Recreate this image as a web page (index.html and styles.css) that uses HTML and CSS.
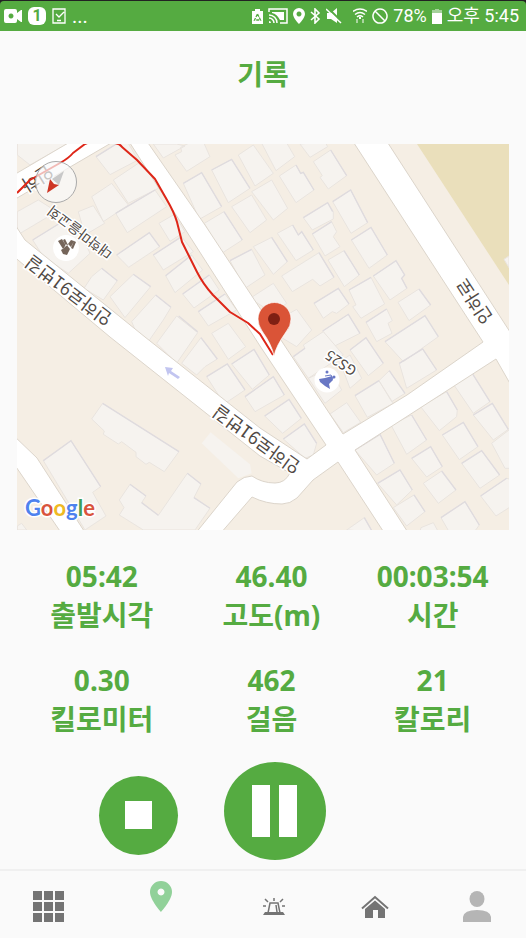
FILE: index.html
```html
<!DOCTYPE html>
<html lang="ko">
<head>
<meta charset="utf-8">
<meta name="viewport" content="width=device-width, initial-scale=1">
<title>기록</title>
<link rel="stylesheet" href="styles.css">
</head>
<body>
<div class="status">
  <div class="status-bar">
    <div class="status-group">
      <svg width="18" height="14" viewBox="0 0 18 14"><path fill="#fff" fill-rule="evenodd" d="M2 0h9q2 0 2 2v2l4-3h1v12h-1l-4-3v2q0 2-2 2H2q-2 0-2-2V2Q0 0 2 0zM7 4.500a2.500 2.500 0 1 0 .01 0z"/></svg>
      <span class="badge">1</span>
      <svg width="14" height="16" viewBox="0 0 14 16"><path fill="none" stroke="#fff" stroke-width="1.300" d="M1 1h12v14H1zM4 6l3 3 5-5M5 12.500h4"/></svg>
      <span class="dots">...</span>
    </div>
    <div class="status-group status-right">
      <svg width="11" height="15" viewBox="0 0 11 15"><path fill="#fff" d="M3 0h5v2h3v13H0V2h3z"/><path fill="none" stroke="#55ab41" stroke-width="1.300" stroke-dasharray="3 1" d="M5.500 5l3 6h-6z"/></svg>
      <svg width="20" height="16" viewBox="0 0 20 16"><path fill="none" stroke="#fff" stroke-width="1.500" d="M1 4V1h18v14h-7M1 7a8 8 0 0 1 8 8M1 10a5 5 0 0 1 5 5"/><path fill="#fff" d="M1 13a2 2 0 0 1 2 2H1zM4 4h12v8h-4Q9 6 4 5z"/></svg>
      <svg width="12" height="16" viewBox="0 0 12 16"><path fill="#fff" fill-rule="evenodd" d="M6 0a6 6 0 0 1 6 6c0 4-6 10-6 10S0 10 0 6a6 6 0 0 1 6-6zm0 3.500a2.500 2.500 0 1 0 .01 0z"/></svg>
      <svg width="11" height="16" viewBox="0 0 11 16"><path fill="none" stroke="#fff" stroke-width="1.600" d="M1 4l8 7-4 4V1l4 4-8 7"/></svg>
      <svg width="16" height="16" viewBox="0 0 16 16"><path fill="#fff" d="M1 5h4l6-5v15l-6-4H1z"/><path stroke="#55ab41" stroke-width="2" d="M2 0l14 14"/><path stroke="#fff" stroke-width="1.500" d="M0 1l15 14"/></svg>
      <svg class="wifi" width="14" height="16" viewBox="0 0 14 16"><path fill="none" stroke="#fff" stroke-width="1.500" d="M0 3.500q7-5 14 0M2 6.500q5-4 10 0M4 9q3-2.500 6 0"/><path fill="#fff" d="M6 9h2v2H6z"/><path opacity=".5" stroke="#fff" stroke-width="2" d="M4 11v4M10 11v4"/></svg>
      <svg width="16" height="16" viewBox="0 0 16 16"><path fill="none" stroke="#fff" stroke-width="1.500" d="M8 1a7 7 0 1 0 .01 0M3 3l10 10"/></svg>
      <span>78%</span>
      <svg width="10" height="15" viewBox="0 0 10 15"><path fill="#a5d29b" d="M3 0h4v1h3v4H0V1h3z"/><path fill="#fff" d="M0 4h10v11H0z"/></svg>
      <span class="clock">오후 5:45</span>
    </div>
  </div>
</div>

<header class="title"><h1>기록</h1></header>

<main>
  <svg class="map" viewBox="17 144 492 386" role="img" aria-label="지도">
    <path fill="#f5eee4" d="M17 144h492v386H17z"/>
    <path fill="#eadfbb" d="M417 144h92v141z"/>
    <g class="buildings">
      <g transform="translate(10 140) scale(.3333)">
        <path d="M22 0h170L60 75 22 45zM258 50L330 5 352 5 384 60 300 104zM310 120L385 70 435 110 445 145 355 190zM245 170L305 130 355 195 280 245zM317 220L435 150 470 200 352 278zM205 215L250 197 284 250 225 285zM22 215L85 180 140 215 22 285zM68 300L165 240 215 285 240 340 175 400 100 350zM320 345L418 278 449 320 356 382zM447 250L495 222 500 235 525 275 480 304zM430 345L515 290 550 335 460 390zM467 407L545 345 578 390 495 458zM518 462L598 405 628 450 552 504zM565 515L645 462 680 510 595 558zM245 410L275 385 322 422 280 480 222 445zM300 470L370 403 422 440 345 533zM365 545L437 465 483 502 460 540 415 605 380 580zM500 528L563 578 500 670 440 610zM495 45L515 35 512 22 545 5 580 5 600 50 530 94zM605 90L665 58 720 145 655 188zM520 130L575 98 635 200 568 238zM665 200L725 165 770 240 720 278zM583 250L642 215 697 300 635 340zM430 12L500 12 525 18 460 54z"/>
        <path class="shade" d="M258 50L330 5M317 220L435 150M68 300L165 240M320 345L418 278 449 320M430 345L515 290M467 407L545 345M518 462L598 405M565 515L645 462M275 385L322 422M370 403L422 440M437 465L483 502M506 528L563 575M520 130L575 98 635 200M642 215L697 300M605 90L665 58 720 145"/>
      </g>
      <g transform="translate(260 140) scale(.3333)">
        <path d="M0 0L75 0 104 50 48 92zM-65 45L-20 15 40 100-15 138zM120 12L195 5 203 20 150 52zM160 65L212 30 260 107 205 147 180 112 187 107zM58 108L108 75 122 100 130 97 162 150 108 188zM-25 155L35 120 83 205 40 240zM218 185L272 150 323 248 273 280zM130 233L203 188 220 215 220 237 157 270zM52 280L98 255 115 285 125 275 160 330 108 362zM157 282L215 245 230 275 220 290 240 320 195 348zM274 300L333 262 382 345 327 385zM-20 320L35 292 82 365 40 403zM65 408L177 338 222 412 180 438 158 418 97 455zM204 360L252 332 298 405 253 440zM340 408L408 362 434 405 425 415 441 445 390 480zM267 450L333 412 374 492 303 535 278 500 288 495zM-90 362L-25 328 15 405-45 445zM-30 475L40 430 80 490 40 520zM162 490L235 445 267 492 230 520 217 515 190 535zM414 487L477 447 512 495 447 542zM318 547L380 507 397 542 384 550 396 580 350 605zM188 573L265 523 300 580 220 620zM80 525L110 508 155 570 110 620 60 590z"/>
        <path d="M732 358l15-10v35z"/>
        <path class="shade" d="M212 30L260 107M108 75L122 100 130 97 162 150M218 185L272 150 323 248M130 233L203 188 218 215M98 255L115 285 125 275 160 330M157 282L215 245M274 300L333 262 382 345M35 292L82 365M177 338L222 412M252 332L298 405M340 408L408 362 434 405 425 415 441 445M267 450L333 412M162 490L235 445 267 492M477 447L512 495M318 547L380 507M188 573L265 523 300 580M-90 362L-25 328"/>
      </g>
      <g transform="translate(10 335) scale(.3333)">
        <path d="M278 205L507 350 463 410 418 382 408 388 378 365 378 352 335 320 325 327 280 298 283 288 245 252zM100 377L183 317 272 455 248 472 288 543 225 585zM360 448L408 483 395 503 445 541 532 415 573 447 552 488 600 520 555 585H400L328 540 342 518 328 495zM22 573L35 565 50 585H22zM573 8L622 72 585 95 560 120 515 85zM605-5L655-35 707 35 655 73zM590 125L652 87 705 165 650 202 635 195zM665 87L732 43 778 120 727 163z"/>
        <path stroke="none" d="M602 292L720 388 725 415 685 430 575 325z"/>
        <path class="shade" d="M278 205L507 350M100 377L183 317 272 455M360 448L408 483M395 503L445 541M532 415L573 447M552 488L600 520M573 8L622 72M590 125L652 87 705 165M665 87L732 43 778 120"/>
      </g>
      <g transform="translate(260 335) scale(.3333)">
        <path d="M-45 185L40 125 73 180-15 230zM14 243L87 193 124 250 68 295zM70 312L133 267 170 325 160 360 135 370zM100 65L135 40 130 30 190-10 250 60 145 130zM270 45L318 8 370 85 325 122zM240 80L270 60 305 130 270 160zM145 130L210 100 245 165 195 205zM210 237L260 203 302 262 250 293zM285 182L357 137 400 205 322 247zM357 137L388 107 435 175 395 200zM375 20L495-58 535 5 430 80zM418 85L488 42 530 105 440 160zM285 345L360 298 403 385 350 420zM393 270L455 240 500 315 440 358zM482 215L560 170 592 225 590 245 538 287zM582 150L635 112 690 200 640 235zM640 240L697 205 745 283 700 315zM547 300L610 262 654 335 598 374zM455 370L512 335 547 395 500 426zM605 385L665 347 719 420 660 460zM695 325L760 275V400L735 400zM490 445L545 408 588 465 535 505zM353 445L420 405 457 465 410 510zM400 518L462 480 495 530 440 573zM662 483L740 430 760 435V510L708 543zM543 548L615 500 658 570 640 595H570zM483 578L520 563 535 590H480zM260 585L313 548 337 590z"/>
        <path class="shade" d="M-45 185L40 125 73 180M14 243L87 193 124 250M70 312L133 267 170 325M100 65L135 40M270 45L318 8 370 85M285 182L357 137M388 107L435 175M375 20L495-58 535 5M418 85L488 42 530 105M285 345L360 298 403 385M455 240L500 315M560 170L592 225M635 112L690 200M640 240L697 205 745 283M547 300L610 262 654 335M455 370L512 335 547 395M605 385L665 347 719 420M545 408L588 465M353 445L420 405 457 465M462 480L495 530M662 483L740 430M543 548L615 500 658 570M313 548L337 590"/>
      </g>
    </g>
    <g class="roads">
      <path d="M128 140h18L205 225 343 434 407 395 483 342 352 140H386L512 335V387L496 359 355 450 409 534H385L338 462 313 480 297 498Q290 504 282 504 266 504 252 497L220 534H195L237 482Q244 476 252 476 262 483 275 483 285 483 290 473L260 456 110 337 12 255V220L25 240 145 337 260 428 307 459 326 445 260 346z"/>
      <path d="M12 434L37 458 86 534H62L12 461zM12 176L75 139H118L12 201z"/>
    </g>

    <path class="way" d="M165 367l8 1-2 3 9 6-2 2-9-6-1 3z"/>
    <g class="labels">
      <text class="road-name" transform="translate(257 439) rotate(216)" dy="6">인하로91번길</text>
      <text class="road-name" transform="translate(69 290) rotate(217)" dy="6">인하로91번길</text>
      <text class="road-name" transform="translate(475 301) rotate(237)" dy="6">인하로</text>
      <text class="road-name" transform="translate(37 178) rotate(148)" dy="6">인하</text>
      <text class="place" transform="translate(80 232) rotate(217)" dy="5">대학마을교회</text>
      <text class="place" transform="translate(341 363) rotate(214)" dy="5">GS25</text>
    </g>
    <circle cx="66" cy="248" r="13" fill="#fff"/>
    <path fill="#75655a" d="M58 241l4-2 4 7-3 3zM63 240l2-1 3 6-2 1zM61 250l2 4 4 1 3-6-4-5-2 4zM68 244l3-4 3 1-3 6zM71 248l3-7 2 1-3 7z"/>
    <circle cx="327" cy="380" r="12.500" fill="#fff"/>
    <path fill="#6877c4" d="M319 379l6-1 7-2 1 4-4 4 1 5-5-3-5-4z"/><path fill="none" stroke="#6877c4" d="M325 376l6-1 2 4"/><circle cx="327" cy="372" r="1.500" fill="#6877c4"/><circle cx="334" cy="377" r="1.500" fill="#6877c4"/>

    <path class="route" d="M17 193Q23 187 30 180L60 163Q69 158 73 153L85 144 100 138 115 143Q120 144 122 147L137 160 155 179 167 200Q174 212 177 222L182 242 197 272Q203 284 213 295L230 312 248 323 260 334 273 355"/>
    <circle cx="56" cy="182" r="20.500" fill="#fafafa" fill-opacity=".7" stroke="#aaa" stroke-width="1"/>
    <path fill="#c8c8c8" d="M64 171l-5 14-7-6z"/><path fill="#ce3524" d="M47 193l3-14 4 5 5 1z"/>
    <path fill="#da5437" stroke="#fff" stroke-opacity=".7" d="M274 356Q272 345 262 331 258 325 258 319A16.500 16.500 0 0 1 291 319Q291 326 286 332 276 346 274 356z"/>
    <circle cx="274" cy="319" r="6" fill="#7f2013"/>
    <text class="google" x="25" y="516"><tspan fill="#4e82ee">G</tspan><tspan fill="#d9543d">o</tspan><tspan fill="#efb924">o</tspan><tspan fill="#4e82ee">g</tspan><tspan fill="#3f9d58">l</tspan><tspan fill="#d9543d">e</tspan></text>
  </svg>

  <dl class="stats">
    <div><dd>05:42</dd><dt>출발시각</dt></div>
    <div><dd>46.40</dd><dt>고도(m)</dt></div>
    <div><dd>00:03:54</dd><dt>시간</dt></div>
    <div><dd>0.30</dd><dt>킬로미터</dt></div>
    <div><dd>462</dd><dt>걸음</dt></div>
    <div><dd>21</dd><dt>칼로리</dt></div>
  </dl>

  <div class="actions">
    <button class="stop" type="button" aria-label="정지"><svg width="27" height="28" viewBox="0 0 27 28"><path fill="#fff" d="M0 0h27v28H0z"/></svg></button>
    <button class="pause" type="button" aria-label="일시정지"><svg width="46" height="52" viewBox="0 0 46 52"><path fill="#fff" d="M0 0h18v52H0zM27 0h18v52H27z"/></svg></button>
  </div>
</main>

<nav class="tabs">
  <a href="#menu" aria-label="메뉴"><svg width="32" height="32" viewBox="0 0 32 32"><path fill="#747474" d="M0 0h9v9H0zM11 0h9v9h-9zM22 0h9v9h-9zM0 11h9v9H0zM11 11h9v9h-9zM22 11h9v9h-9zM0 22h9v9H0zM11 22h9v9h-9zM22 22h9v9h-9z"/></svg></a>
  <a class="current" href="#record" aria-label="기록"><svg width="22" height="31" viewBox="0 0 22 31"><path fill="#91d199" fill-rule="evenodd" d="M11 0a11 11 0 0 1 11 11c0 8-11 20-11 20S0 19 0 11A11 11 0 0 1 11 0zm0 7.500a3.500 3.500 0 1 0 .01 0z"/></svg></a>
  <a href="#alarm" aria-label="긴급"><svg width="24" height="20" viewBox="0 0 24 20"><path fill="none" stroke="#747474" stroke-width="1.500" d="M6 16L8 6h8l2 10M14 8l1 7M12 1v3M3 2l3 3M21 2l-3 3M1 9h3M20 9h3"/><path fill="#747474" d="M3 15h18l2 3H1z"/></svg></a>
  <a href="#home" aria-label="홈"><svg width="28" height="24" viewBox="0 0 28 24"><path fill="none" stroke="#747474" stroke-width="2" d="M1 13.500L14 2l13 11.500"/><path fill="#747474" d="M4 14L14 5.500 24 14v9h-7v-8h-5v8H4z"/></svg></a>
  <a href="#profile" aria-label="프로필"><svg width="28" height="31" viewBox="0 0 28 31"><ellipse cx="14" cy="8" rx="7.500" ry="8" fill="#b5b5b5"/><path fill="#b5b5b5" d="M0 31v-5q1-7 14-7t14 7v5z"/></svg></a>
</nav>
</body>
</html>
```
FILE: styles.css
```css
* { box-sizing: border-box; }

body {
  margin: 0;
  min-height: 100vh;
  display: flex;
  flex-direction: column;
  background: #fafafa;
  color: #55ab41;
  font-family: "Noto Sans", "Noto Sans CJK KR", sans-serif;
}

svg { display: block; flex: none; }

.status { background: #222; }

.status-bar {
  display: flex;
  justify-content: space-between;
  align-items: center;
  height: 30px;
  margin-top: 1px;
  padding: 0 7px 0 4px;
  border-radius: 4px 4px 0 0;
  background: #55ab41;
  color: #fff;
  font-family: Roboto, "Noto Sans CJK KR", sans-serif;
  font-size: 18px;
  line-height: 30px;
  white-space: nowrap;
}

.status-group {
  display: flex;
  align-items: center;
  gap: 6px;
}

.status-right { gap: 5px; }

.wifi { margin-left: 6px; }

.badge {
  width: 18px;
  height: 18px;
  border-radius: 6px;
  background: #fff;
  color: #55ab41;
  font-size: 16px;
  font-weight: 700;
  line-height: 18px;
  text-align: center;
}

.dots { font-size: 20px; }

.title {
  height: 113px;
  padding-top: 24px;
  text-align: center;
}

h1 {
  margin: 0;
  font-size: 28px;
  line-height: 39px;
}

main { padding: 0 17px; }

.map {
  width: 100%;
  height: auto;
  overflow: hidden;
}

.buildings {
  fill: #f6f3ef;
  stroke: #e9e4df;
  stroke-width: 3;
}

.buildings .shade {
  fill: none;
  stroke: #dfdbde;
  stroke-width: 4;
}

.roads {
  fill: #fff;
  stroke: #dcd5cb;
  stroke-width: 1;
}

.way { fill: #c2c5f0; }

.route {
  fill: none;
  stroke: #de2618;
  stroke-width: 2;
  stroke-linejoin: round;
}

.labels {
  fill: #514a45;
  stroke: #fff;
  stroke-width: 3;
  paint-order: stroke;
  text-anchor: middle;
  font-family: "Noto Sans CJK KR", sans-serif;
}

.road-name { font-size: 18px; }

.place { font-size: 14px; }

.google {
  font-family: Lato, sans-serif;
  font-size: 22px;
  font-weight: 700;
  stroke: #fff;
  stroke-width: 3;
  paint-order: stroke;
}

.stats {
  display: grid;
  grid-template-columns: 10fr 10fr 9fr;
  row-gap: 26px;
  margin: 0;
  padding-top: 27px;
  font-size: 28px;
  font-weight: 700;
  line-height: 39px;
  text-align: center;
  white-space: nowrap;
}

.stats dd { margin: 0; }

.actions {
  display: flex;
  align-items: center;
  gap: 46px;
  padding: 23px 0 8px 82px;
}

.actions button {
  display: grid;
  place-items: center;
  padding: 0;
  border: 0;
  border-radius: 50%;
  background: #55ab41;
}

.stop {
  width: 79px;
  height: 79px;
  margin-top: 8px;
}

.pause {
  width: 102px;
  height: 98px;
}

.tabs {
  display: grid;
  grid-template-columns: 97fr 128fr 98fr 104fr 99fr;
  height: 69px;
  margin-top: auto;
  border-top: 2px solid #f0f0f0;
}

.tabs a {
  display: grid;
  place-items: center;
  padding-top: 4px;
}

.tabs .current { padding: 0 0 16px; }
```
